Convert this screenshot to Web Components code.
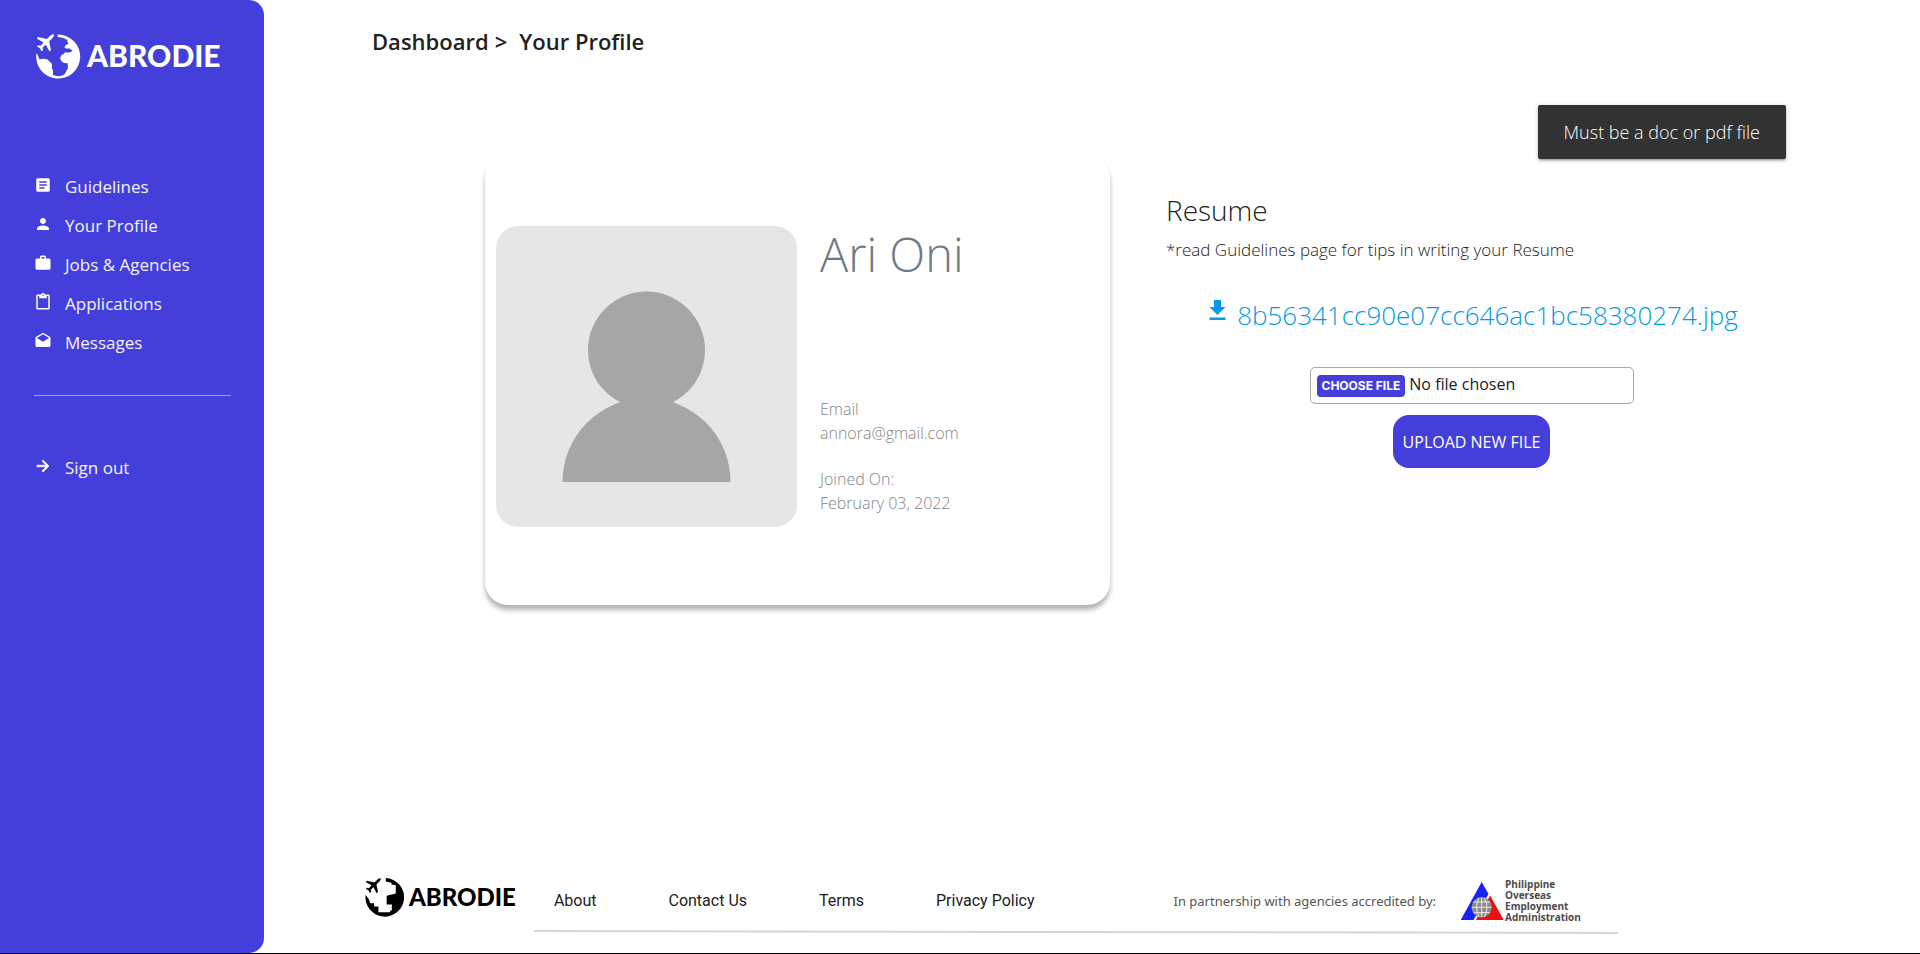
<!DOCTYPE html>
<html lang="en">
<head>
<meta charset="utf-8">
<title>Abrodie - Your Profile</title>
<style>
  body { margin: 0; background: #fff; color: #212121; font: 16px/24px "Open Sans", "Noto Sans", sans-serif; }
</style>
</head>
<body>
<abrodie-app>
  <side-bar slot="side"></side-bar>
  <bread-crumb slot="head"></bread-crumb>
  <toast-message slot="toast">Must be a doc or pdf file</toast-message>
  <profile-card slot="content" name="Ari Oni" email="annora@gmail.com" joined="February 03, 2022"></profile-card>
  <resume-panel slot="content" file="8b56341cc90e07cc646ac1bc58380274.jpg"></resume-panel>
  <site-footer slot="foot"></site-footer>
</abrodie-app>

<script>
class Base extends HTMLElement {
  connectedCallback() {
    if (this.shadowRoot) return;
    this.attachShadow({ mode: 'open' }).innerHTML = this.render();
  }
}

customElements.define('abrodie-app', class extends Base {
  render() { return `
    <style>
      :host { display: grid; grid-template-columns: 264px minmax(0, 1fr); min-height: 100vh; box-sizing: border-box; border-bottom: 1px solid #000; position: relative; }
      .main { display: flex; flex-direction: column; min-width: 0; }
      main { display: grid; grid-template-columns: minmax(0, 625fr) minmax(0, 611fr); gap: 56px; padding: 0 143px 0 221px; margin-top: 99px; }
      .toast { position: absolute; top: 105px; right: 134px; }
      .foot { margin-top: auto; }
    </style>
    <slot name="side"></slot>
    <div class="main">
      <slot name="head"></slot>
      <main><slot name="content"></slot></main>
      <div class="foot"><slot name="foot"></slot></div>
    </div>
    <div class="toast"><slot name="toast"></slot></div>`; }
});

const PLANE = 'M18 .5Q18.6 1.6 16.6 4L13.2 7.6L15 16L13.5 17.6L9.8 10.8L6.7 13.6L7 16L5.6 17.2L4 14.2L1 12.6L2.2 11.2L4.5 11.7L7.5 8.4L.8 4.6L2.4 3.1L10.8 5.1L14.5 1.6Q17 -.1 18 .5Z';
const ROUND = 'M21.7 .6A22 22 0 1 1 .5 19Q2 21 3.5 25.5Q6 24.5 9 25Q12 24.5 13.3 27.5Q16.5 29 16 32Q15.6 34 17 36.5V41Q23 43.5 28.5 40.5L32 34L31.5 29Q26 30 24.3 25Q24 21.5 27.5 20Q28.500 17.500 32 18.500Q35 19 36.500 16.500Q35 15.500 33 14.200Q30 15.500 28.500 13.200Q29 11 32.500 9.500Q31 8 31.500 6Q27 3.200 21.700 3Z';
const BLOCKY = 'M24 0A22.300 22.300 0 1 1 .7 19.500L4.500 24.500L6 29H10.500V33H15.500V39.500H29V37.500H31V30.500H25V20.500L35.500 18V8.500L30.500 7.500V5.500L24 4Z';

customElements.define('brand-logo', class extends Base {
  render() {
    const land = this.hasAttribute('blocky') ? BLOCKY : ROUND;
    return `
    <style>
      :host { display: flex; align-items: center; gap: var(--logo-gap, 6px); font: 900 var(--logo-text, 30px)/1 Lato, sans-serif; }
      svg { width: var(--logo-size, 45px); height: var(--logo-size, 45px); fill: currentColor; flex: none; }
      span { padding-bottom: var(--logo-lift, 3px); }
    </style>
    <svg viewBox="0 0 45 45" aria-hidden="true"><path d="${land}"/><path d="${PLANE}"/></svg><span>ABRODIE</span>`; }
});

const ICONS = {
  article: 'M19 3H5c-1.100 0-2 .9-2 2v14c0 1.100.9 2 2 2h14c1.100 0 2-.9 2-2V5c0-1.100-.9-2-2-2zm-5 14H7v-2h7v2zm3-4H7v-2h10v2zm0-4H7V7h10v2z',
  person: 'M12 12c2.210 0 4-1.790 4-4s-1.790-4-4-4-4 1.790-4 4 1.790 4 4 4zm0 2c-2.670 0-8 1.340-8 4v2h16v-2c0-2.660-5.330-4-8-4z',
  work: 'M20 6h-4V4c0-1.110-.89-2-2-2h-4c-1.110 0-2 .89-2 2v2H4c-1.110 0-1.990.89-1.990 2L2 19c0 1.110.89 2 2 2h16c1.110 0 2-.89 2-2V8c0-1.110-.89-2-2-2zm-6 0h-4V4h4v2z',
  clipboard: 'M19 2h-4.180C14.400.84 13.300 0 12 0c-1.300 0-2.400.84-2.820 2H5c-1.100 0-2 .9-2 2v16c0 1.100.9 2 2 2h14c1.100 0 2-.9 2-2V4c0-1.100-.9-2-2-2zm-7 0c.55 0 1 .45 1 1s-.45 1-1 1-1-.45-1-1 .45-1 1-1zm7 18H5V4h2v3h10V4h2v16z',
  drafts: 'M21.990 8c0-.72-.37-1.350-.94-1.700L12 1 2.950 6.300C2.380 6.650 2 7.280 2 8v10c0 1.100.9 2 2 2h16c1.100 0 2-.9 2-2l-.01-10zM12 13L3.740 7.840 12 3l8.260 4.840L12 13z',
  arrow: 'M12 4l-1.410 1.410L16.170 11H4v2h12.170l-5.580 5.590L12 20l8-8z'
};

customElements.define('nav-item', class extends Base {
  render() { return `
    <style>
      :host { display: block; }
      a { display: flex; align-items: center; gap: 13px; height: 39px; color: #f4f3ff; text-decoration: none; font-size: 17px; white-space: nowrap; }
      svg { width: 18px; height: 18px; fill: #fff; padding-bottom: 4px; flex: none; }
      .arrow { stroke: #fff; stroke-width: 1; }
    </style>
    <a href="#"><svg class="${this.getAttribute('icon')}" viewBox="0 0 24 24" aria-hidden="true"><path d="${ICONS[this.getAttribute('icon')]}"/></svg><slot></slot></a>`; }
});

customElements.define('side-bar', class extends Base {
  render() { return `
    <style>
      :host { display: block; box-sizing: border-box; background: #443fdb; border-radius: 0 15px 15px 0; padding: 34px 33px 34px 34px; color: #fff; }
      brand-logo { margin-left: 2px; }
      nav { margin-top: 88px; }
      hr { border: 0; border-top: 1px solid #a5a2ee; margin: 33px 0 52px; }
    </style>
    <brand-logo></brand-logo>
    <nav aria-label="Main">
      <nav-item icon="article">Guidelines</nav-item>
      <nav-item icon="person">Your Profile</nav-item>
      <nav-item icon="work">Jobs &amp; Agencies</nav-item>
      <nav-item icon="clipboard">Applications</nav-item>
      <nav-item icon="drafts">Messages</nav-item>
      <hr>
      <nav-item icon="arrow">Sign out</nav-item>
    </nav>`; }
});

customElements.define('bread-crumb', class extends Base {
  render() { return `
    <style>
      :host { display: block; padding: 26px 0 0 108px; font-size: 22px; line-height: 30px; font-weight: 600; }
      nav { display: flex; }
      a { color: inherit; text-decoration: none; }
      .sep { margin: 0 12px 0 6px; }
    </style>
    <nav aria-label="Breadcrumb"><a href="#">Dashboard</a><span class="sep">&gt;</span><a href="#">Your Profile</a></nav>`; }
});

customElements.define('toast-message', class extends Base {
  render() { return `
    <style>
      :host { display: block; box-sizing: border-box; min-width: 248px; padding: 15px 26px; border-radius: 2px; background: #323232; color: #fff; text-align: center;
        font: 300 18px/24px "Open Sans", sans-serif; box-shadow: 0 2px 2px rgba(0,0,0,.14), 0 3px 1px -2px rgba(0,0,0,.12), 0 1px 5px rgba(0,0,0,.2); }
    </style>
    <div role="status"><slot></slot></div>`; }
});

customElements.define('profile-card', class extends Base {
  render() { return `
    <style>
      :host { display: flex; box-sizing: border-box; align-items: flex-start; gap: 23px; padding: 71px 11px 78px; min-height: 450px; border-radius: 23px; background: #fff; box-shadow: 0 5px 5px rgba(0,0,0,.3); color: #808489; font-weight: 300; }
      svg { width: 301px; height: 301px; border-radius: 22px; background: #e6e6e6; fill: #a6a6a6; flex: none; }
      h1 { margin: 0 0 115px; font-size: 47px; line-height: 56px; font-weight: 300; color: #6f7a84; }
      dl, dt, dd { margin: 0; }
      dd + dt { margin-top: 22px; }
    </style>
    <svg viewBox="0 0 301 301" role="img" aria-label="Profile picture"><circle cx="150.500" cy="124" r="58.500"/><path d="M66.500 256a84 84 0 0 1 168 0z"/></svg>
    <div>
      <h1>${this.getAttribute('name')}</h1>
      <dl>
        <dt>Email</dt><dd>${this.getAttribute('email')}</dd>
        <dt>Joined On:</dt><dd>${this.getAttribute('joined')}</dd>
      </dl>
    </div>`; }
});

customElements.define('resume-panel', class extends Base {
  render() { return `
    <style>
      :host { display: block; padding-top: 37px; font-weight: 300; }
      h2 { margin: 0 0 9px; font-size: 28px; line-height: 36px; font-weight: 300; }
      p { margin: 0; font-size: 17px; line-height: 26px; }
      .file { display: flex; justify-content: center; gap: 8px; margin-top: 34px; font-size: 26px; line-height: 36px; color: #039be5; text-decoration: none; }
      .file svg { width: 24px; height: 28px; fill: #039be5; flex: none; }
      form { display: flex; flex-direction: column; align-items: center; gap: 11px; margin-top: 34px; font-weight: 400; }
      input { box-sizing: border-box; width: 324px; height: 37px; padding: 5px 6px 7px; border: 1px solid #a6a6a6; border-radius: 5px; color: #212121; font: 16px/22px "Open Sans", sans-serif; }
      input::file-selector-button { height: 22px; padding: 0 5px; margin: 0 4px 0 0; border: 0; border-radius: 4px; background: #443fdb; color: #fff; font: 700 12px/22px Inter, sans-serif; text-transform: uppercase; }
      button { height: 53px; padding: 0 10px; border: 0; border-radius: 16px; background: #443fdb; color: #fff; font: 16px/24px "Open Sans", sans-serif; }
    </style>
    <h2>Resume</h2>
    <p>*read Guidelines page for tips in writing your Resume</p>
    <a class="file" href="#"><svg viewBox="0 0 24 28" aria-hidden="true"><path d="M9 3h7v7h4.500L12.500 18L4.500 10H9zM4.500 20.500h16v2.500h-16z"/></svg><span>${this.getAttribute('file')}</span></a>
    <form onsubmit="return false">
      <input type="file" aria-label="Resume file">
      <button type="submit">UPLOAD NEW FILE</button>
    </form>`; }
});

customElements.define('poea-logo', class extends Base {
  render() { return `
    <style>
      :host { display: flex; align-items: center; font: 700 10px/11px "Open Sans", sans-serif; color: #4a4a4a; white-space: nowrap; }
      svg { width: 45px; height: 40px; flex: none; }
      span { display: block; }
    </style>
    <svg viewBox="0 0 45 40" aria-hidden="true">
      <path fill="#1524f5" d="M21.700 1L28.500 13L13.500 39H.7z"/><path fill="#ee1010" d="M30.200 14.500L43.700 39H16L18 35z"/>
      <circle cx="21.700" cy="26.300" r="10.200" fill="#8b8b8b"/>
      <path fill="none" stroke="#eee" stroke-width="1" d="M21.700 16.500v19.600M12 26.300h19.400M13.500 21h16.400M13.500 31.600h16.400M19 16.700q-5 9.600 0 19.200M24.400 16.700q5 9.600 0 19.200"/>
    </svg>
    <div><span>Philippine</span><span>Overseas</span><span>Employment</span><span>Administration</span></div>`; }
});

customElements.define('site-footer', class extends Base {
  render() { return `
    <style>
      :host { display: block; padding: 0 40px 19px 101px; }
      .row { display: flex; align-items: center; height: 54px; }
      brand-logo { --logo-size: 39px; --logo-text: 24px; --logo-gap: 5px; --logo-lift: 0px; color: #000; padding-bottom: 8px; }
      nav { display: flex; gap: 72px; margin-left: 38px; }
      a { color: #212121; text-decoration: none; font: 16px/24px Roboto, sans-serif; white-space: nowrap; }
      .partner { margin-left: 139px; font: 13px/24px "Noto Sans", sans-serif; color: #555; white-space: nowrap; }
      poea-logo { margin-left: 24px; }
      .rule { display: block; width: calc(100% - 431px); height: 4px; margin: 2px 0 0 169px; }
    </style>
    <footer>
      <div class="row">
        <brand-logo blocky></brand-logo>
        <nav aria-label="Footer"><a href="#">About</a><a href="#">Contact Us</a><a href="#">Terms</a><a href="#">Privacy Policy</a></nav>
        <span class="partner">In partnership with agencies accredited by:</span>
        <poea-logo></poea-logo>
      </div>
      <svg class="rule" viewBox="0 0 1084 4" preserveAspectRatio="none" aria-hidden="true"><path d="M0 0L1084 2V4L0 2z" fill="#d6d6d6"/></svg>
    </footer>`; }
});
</script>
</body>
</html>
